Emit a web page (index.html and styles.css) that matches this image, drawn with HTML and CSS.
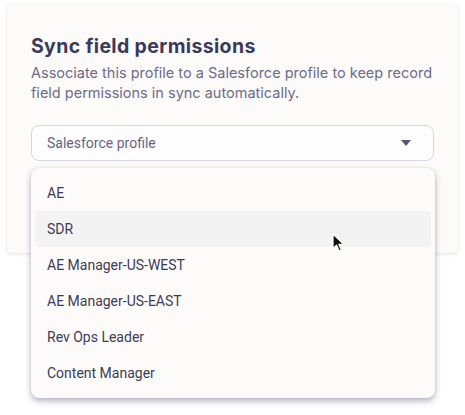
FILE: index.html
```html
<!DOCTYPE html>
<html>
<head>
<meta charset="utf-8">
<link rel="stylesheet" href="styles.css">
</head>
<body>
<div class="page">
  <section class="card">
    <h1 class="title">Sync field permissions</h1>
    <p class="desc">Associate this profile to a Salesforce profile to keep record field permissions in sync automatically.</p>
    <div class="select">
      <span class="select-label">Salesforce profile</span>
      <svg class="caret" width="10" height="6" viewBox="0 0 10 6"><path d="M0 0H10L5 6Z" fill="#56557a"/></svg>
    </div>
  </section>
  <ul class="menu">
    <li class="item">AE</li>
    <li class="item hover">SDR
      <svg class="cursor" width="13" height="19" viewBox="0 0 13 19"><path d="M1 1V15.5L4.6 12.2L7.2 18L9.4 17L6.9 11.4H11.8Z" fill="#111" stroke="#fff" stroke-width="1.2" stroke-linejoin="round"/></svg>
    </li>
    <li class="item">AE Manager-US-WEST</li>
    <li class="item">AE Manager-US-EAST</li>
    <li class="item">Rev Ops Leader</li>
    <li class="item">Content Manager</li>
  </ul>
</div>
</body>
</html>
```

FILE: styles.css
```css
* { box-sizing: border-box; }
html, body { margin: 0; padding: 0; background: #ffffff; }
body {
  width: 465px;
  height: 415px;
  overflow: hidden;
  font-family: Inter, "Noto Sans", sans-serif;
}
.page {
  position: relative;
  padding: 5px 7px 0 7px;
}
.card {
  width: 451px;
  height: 248px;
  background: #fcfbfa;
  border-radius: 5px;
  box-shadow: 0 1px 4px rgba(40, 38, 70, 0.12), 0 0 1px rgba(40, 38, 70, 0.08);
  padding: 29px 24px 0 24px;
}
.title {
  margin: 0;
  font-size: 19.5px;
  line-height: 24px;
  font-weight: 700;
  color: #3b3a5a;
  letter-spacing: 0.35px;
}
.desc {
  margin: 5px 0 0 0;
  font-size: 14.5px;
  line-height: 20px;
  color: #6c6b88;
}
.select {
  margin-top: 22px;
  height: 36px;
  border: 1px solid #d6d5e6;
  border-radius: 8px;
  background: #fdfdfd;
  display: flex;
  align-items: center;
  justify-content: space-between;
  padding: 0 22px 0 15px;
}
.select-label {
  font-family: Roboto, "Noto Sans", sans-serif;
  font-size: 14px;
  color: #66657f;
}
.caret { display: block; }
.menu {
  position: absolute;
  left: 31px;
  top: 168px;
  width: 404px;
  margin: 0;
  padding: 7px 4px;
  list-style: none;
  background: #fcfbfa;
  border-radius: 8px;
  box-shadow: 0 3px 6px rgba(40, 38, 70, 0.35), 0 0 2px rgba(40, 38, 70, 0.1);
}
.item {
  position: relative;
  height: 36px;
  line-height: 36px;
  padding: 0 12px;
  border-radius: 4px;
  font-family: Roboto, "Noto Sans", sans-serif;
  font-size: 14px;
  color: #3d3c56;
}
.item.hover { background: #f3f3f4; }
.cursor {
  position: absolute;
  left: 297px;
  top: 22px;
}
```
